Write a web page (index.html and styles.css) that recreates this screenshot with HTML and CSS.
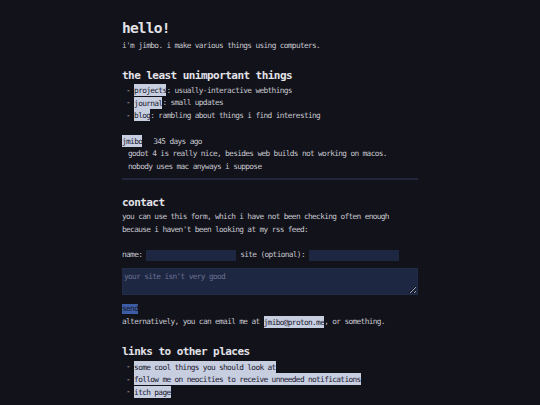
FILE: index.html
```html
<!DOCTYPE html>
<html lang="en">
<head>
<meta charset="utf-8">
<title>hello!</title>
<link rel="stylesheet" href="styles.css">
</head>
<body>
<main class="page">
  <h1 class="title">hello!</h1>
  <p class="line">i'm jimbo. i make various things using computers.</p>

  <h2 class="heading">the least unimportant things</h2>
  <ul class="list">
    <li><a class="hl" href="#">projects</a>: usually-interactive webthings</li>
    <li><a class="hl" href="#">journal</a>: small updates</li>
    <li><a class="hl" href="#">blog</a>: rambling about things i find interesting</li>
  </ul>

  <div class="post">
    <div class="post-head"><span class="hl">jmibo</span><span class="ago">345 days ago</span></div>
    <div class="post-body">godot 4 is really nice, besides web builds not working on macos.<br>nobody uses mac anyways i suppose</div>
  </div>
  <hr class="rule">

  <h2 class="heading">contact</h2>
  <p class="line">you can use this form, which i have not been checking often enough<br>because i haven't been looking at my rss feed:</p>

  <form class="form">
    <div class="row">
      <label class="label">name:</label>
      <input class="field" type="text">
      <label class="label">site (optional):</label>
      <input class="field" type="text">
    </div>
    <textarea class="area" placeholder="your site isn't very good"></textarea>
    <button class="send" type="button">send</button>
  </form>
  <p class="line">alternatively, you can email me at <a class="hl" href="#">jmibo@proton.me</a>, or something.</p>

  <h2 class="heading">links to other places</h2>
  <ul class="list">
    <li><a class="hl" href="#">some cool things you should look at</a></li>
    <li><a class="hl" href="#">follow me on neocities to receive unneeded notifications</a></li>
    <li><a class="hl" href="#">itch page</a></li>
  </ul>
</main>
</body>
</html>
```

FILE: styles.css
```css
html, body {
  margin: 0;
  padding: 0;
  background: #12121a;
}

body {
  color: #c6c6ce;
  font-family: "DejaVu Sans Mono", "Liberation Mono", monospace;
  font-size: 7.8px;
  letter-spacing: -0.65px;
  line-height: 12.5px;
}

.page {
  width: 296px;
  margin: 0 auto;
  padding-top: 18px;
}

.title {
  margin: 0 0 1.5px;
  font-size: 14.5px;
  line-height: 20px;
  letter-spacing: -0.8px;
  font-weight: bold;
  color: #e2e2e8;
}

.heading {
  margin: 15.5px 0 0;
  font-size: 11px;
  line-height: 16px;
  letter-spacing: -0.55px;
  font-weight: bold;
  color: #e2e2e8;
}

.line {
  margin: 0;
}

.list {
  list-style: none;
  margin: 1px 0 0;
  padding: 0 0 0 4px;
}

.list li::before {
  content: "- ";
  white-space: pre;
}

.hl {
  background: #c7cee0;
  color: #1c2030;
  text-decoration: none;
  padding: 1.5px 0;
}

.post {
  margin-top: 13.5px;
}

.ago {
  margin-left: 11px;
}

.post-body {
  padding-left: 6px;
}

.rule {
  border: 0;
  height: 2px;
  margin: 4.5px 0 0;
  background: #23253a;
}

.form {
  margin: 13px 0 0;
}

.row {
  display: flex;
  align-items: center;
  gap: 4px;
  height: 12.5px;
}

.field {
  width: 90px;
  height: 11px;
  box-sizing: border-box;
  border: 0;
  margin: 0;
  padding: 0 2px;
  background: #1e2742;
  color: #c6c6ce;
  font: inherit;
  letter-spacing: inherit;
}

.area {
  display: block;
  width: 296px;
  height: 27px;
  box-sizing: border-box;
  margin: 6px 0 0;
  padding: 2px 1px;
  border: 1px solid #222b47;
  background: #1e2742;
  color: #c6c6ce;
  font: inherit;
  letter-spacing: inherit;
  line-height: 12.5px;
}

.area::placeholder {
  color: #6a7190;
}

.send {
  display: block;
  margin: 9px 0 2px;
  padding: 0;
  height: 10.5px;
  border: 0;
  background: #3d5ca6;
  color: #151a2a;
  font: inherit;
  letter-spacing: inherit;
  line-height: 10.5px;
}
```
